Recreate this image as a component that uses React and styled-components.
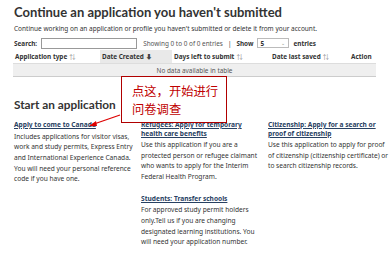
import React from "react";
import styled, { createGlobalStyle } from "styled-components";

const GlobalStyle = createGlobalStyle`
  body {
    margin: 0;
    background: #fff;
    font-family: "Noto Sans", "Noto Sans CJK SC", sans-serif;
    color: #333;
  }
`;

const Page = styled.div`
  position: relative;
  width: 389px;
  height: 270px;
  overflow: hidden;
  padding: 3px 13px 0 14px;
  box-sizing: border-box;
`;

const Title = styled.h2`
  margin: 0;
  font-family: "Lato", sans-serif;
  font-weight: 700;
  font-size: 13px;
  line-height: 18px;
  color: #333;
`;

const Lead = styled.p`
  margin: 3px 0 0;
  font-size: 6.5px;
  line-height: 10px;
`;

const Controls = styled.div`
  display: flex;
  align-items: center;
  gap: 4px;
  margin-top: 3px;
  height: 12px;
  font-size: 6.4px;
`;

const Label = styled.span`
  font-weight: 700;
`;

const SearchBox = styled.div`
  width: 96px;
  height: 11px;
  border: 1px solid #999;
  box-sizing: border-box;
  margin-right: 2px;
`;

const Info = styled.span`
  color: #555;
`;

const Divider = styled.span`
  margin: 0 1px;
`;

const Select = styled.div`
  width: 32px;
  height: 10px;
  border: 1px solid #bbb;
  box-sizing: border-box;
  display: flex;
  align-items: center;
  justify-content: space-between;
  padding: 0 3px 0 2px;
  font-weight: 700;
  font-size: 6.4px;
  & span {
    font-weight: 400;
    color: #888;
    font-size: 5px;
  }
`;

const Table = styled.div`
  margin-top: 1px;
  margin-left: -1px;
  width: 363px;
  border-bottom: 1px solid #ccc;
`;

const HeadRow = styled.div`
  display: grid;
  grid-template-columns: 87px 72px 98px 80px 26px;
  height: 13px;
`;

const HeadCell = styled.div`
  display: flex;
  align-items: center;
  padding-left: ${(p) => (p.$pad ? p.$pad : 2)}px;
  font-size: 6.4px;
  font-weight: 700;
  background: ${(p) => (p.$sorted ? "#e9e9e9" : "transparent")};
  white-space: nowrap;
  & i {
    font-style: normal;
    font-weight: 400;
    color: #888;
    margin-left: 2px;
  }
`;

const EmptyRow = styled.div`
  height: 12px;
  display: flex;
  align-items: center;
  justify-content: center;
  background: #efefef;
  border-top: 1px solid #ddd;
  font-size: 6.4px;
  color: #555;
`;

const SectionTitle = styled.h2`
  margin: 20px 0 0;
  font-family: "Lato", sans-serif;
  font-weight: 700;
  font-size: 11.8px;
  line-height: 16px;
  color: #333;
`;

const Columns = styled.div`
  display: grid;
  grid-template-columns: 121px 121px 121px;
  column-gap: 6px;
  margin-top: 8px;
`;

const Column = styled.div`
  display: flex;
  flex-direction: column;
`;

const Item = styled.div`
  margin-bottom: 12px;
`;

const ItemLink = styled.a`
  display: block;
  font-size: 6.6px;
  font-weight: 700;
  line-height: 8.5px;
  color: #284162;
  text-decoration: underline;
`;

const ItemText = styled.p`
  margin: 2px 0 0;
  font-size: 6.6px;
  line-height: 10.7px;
  color: #333;
`;

const Note = styled.div`
  position: absolute;
  left: 121px;
  top: 76px;
  width: 106px;
  height: 47px;
  box-sizing: border-box;
  border: 1px solid #b00000;
  background: #fff;
  padding: 5px 0 0 10px;
  font-family: "Noto Sans CJK SC", sans-serif;
  font-size: 12.3px;
  line-height: 18px;
  color: #c00000;
`;

const Arrow = styled.svg`
  position: absolute;
  left: 86px;
  top: 114px;
`;

const items = [
  [
    {
      link: "Apply to come to Canada",
      text: "Includes applications for visitor visas, work and study permits, Express Entry and International Experience Canada. You will need your personal reference code if you have one.",
    },
  ],
  [
    {
      link: "Refugees: Apply for temporary health care benefits",
      text: "Use this application if you are a protected person or refugee claimant who wants to apply for the Interim Federal Health Program.",
    },
    {
      link: "Students: Transfer schools",
      text: "For approved study permit holders only.Tell us if you are changing designated learning institutions. You will need your application number.",
    },
  ],
  [
    {
      link: "Citizenship: Apply for a search or proof of citizenship",
      text: "Use this application to apply for proof of citizenship (citizenship certificate) or to search citizenship records.",
    },
  ],
];

export default function App() {
  return (
    <Page>
      <GlobalStyle />
      <Title>Continue an application you haven't submitted</Title>
      <Lead>
        Continue working on an application or profile you haven't submitted or
        delete it from your account.
      </Lead>
      <Controls>
        <Label>Search:</Label>
        <SearchBox />
        <Info>Showing 0 to 0 of 0 entries</Info>
        <Divider>|</Divider>
        <Label>Show</Label>
        <Select>
          5<span>⌄</span>
        </Select>
        <Label>entries</Label>
      </Controls>
      <Table>
        <HeadRow>
          <HeadCell>
            Application type<i>⇅</i>
          </HeadCell>
          <HeadCell $sorted>
            Date Created<i style={{ color: "#444" }}>⬇</i>
          </HeadCell>
          <HeadCell>
            Days left to submit<i>⇅</i>
          </HeadCell>
          <HeadCell>
            Date last saved<i>⇅</i>
          </HeadCell>
          <HeadCell $pad={1}>Action</HeadCell>
        </HeadRow>
        <EmptyRow>No data available in table</EmptyRow>
      </Table>
      <SectionTitle>Start an application</SectionTitle>
      <Columns>
        {items.map((col, i) => (
          <Column key={i}>
            {col.map((it) => (
              <Item key={it.link}>
                <ItemLink href="#">{it.link}</ItemLink>
                <ItemText>{it.text}</ItemText>
              </Item>
            ))}
          </Column>
        ))}
      </Columns>
      <Note>
        点这，开始进行
        <br />
        问卷调查
      </Note>
      <Arrow width="36" height="14" viewBox="0 0 36 14">
        <line x1="34" y1="1" x2="8" y2="10" stroke="#d00" strokeWidth="1.2" />
        <polygon points="3,12 10,7 11,12" fill="#d00" />
      </Arrow>
    </Page>
  );
}
